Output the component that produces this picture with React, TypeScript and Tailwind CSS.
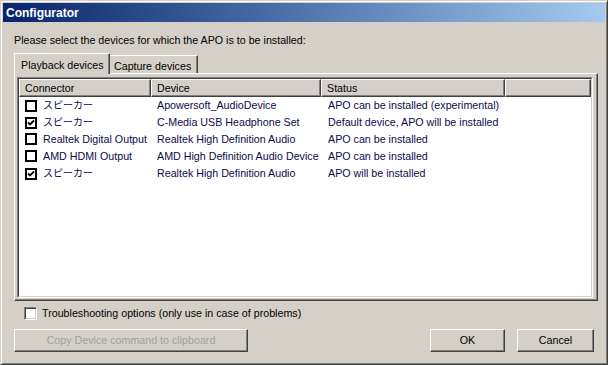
import React from 'react'

const font = { fontFamily: '"Liberation Sans", "Noto Sans CJK JP", sans-serif' }

type Row = { checked: boolean; connector: string; device: string; status: string; jp?: boolean }

const rows: Row[] = [
  { checked: false, connector: 'スピーカー', jp: true, device: 'Apowersoft_AudioDevice', status: 'APO can be installed (experimental)' },
  { checked: true, connector: 'スピーカー', jp: true, device: 'C-Media USB Headphone Set', status: 'Default device, APO will be installed' },
  { checked: false, connector: 'Realtek Digital Output', device: 'Realtek High Definition Audio', status: 'APO can be installed' },
  { checked: false, connector: 'AMD HDMI Output', device: 'AMD High Definition Audio Device', status: 'APO can be installed' },
  { checked: true, connector: 'スピーカー', jp: true, device: 'Realtek High Definition Audio', status: 'APO will be installed' },
]

const raised =
  'border border-t-white border-l-white border-r-[#404040] border-b-[#404040] shadow-[inset_-1px_-1px_0_#808080]'

function ListCheck({ checked }: { checked: boolean }) {
  return (
    <span className="flex h-[12px] w-[12px] shrink-0 items-center justify-center border-2 border-black bg-white">
      {checked && (
        <svg width="8" height="8" viewBox="0 0 8 8">
          <path d="M1 3.5 L3 5.5 L7 1.5" stroke="#000" strokeWidth="1.8" fill="none" />
        </svg>
      )}
    </span>
  )
}

function HeaderCell({ label, width }: { label: string; width: string }) {
  return (
    <div className={`${width} ${raised} flex h-full shrink-0 items-center pl-[5px] text-black`}>{label}</div>
  )
}

export default function App() {
  return (
    <div
      className="h-[365px] w-[608px] overflow-hidden border border-t-[#d4d0c8] border-l-[#d4d0c8] border-r-[#404040] border-b-[#404040] bg-[#d4d0c8] p-[2px] text-[10.7px] shadow-[inset_1px_1px_0_white,inset_-1px_-1px_0_#808080]"
      style={font}
    >
      <div className="flex h-[19px] items-center bg-gradient-to-r from-[#0a246a] to-[#a6caf0] pl-[3px] text-[12px] font-bold text-white">
        Configurator
      </div>

      <div className="px-[11px]">
        <div className="mt-[12px] h-[13px] leading-[13px] text-black">
          Please select the devices for which the APO is to be installed:
        </div>

        <div className="mt-[6px] flex h-[20px] items-end">
          <div className="relative z-10 -mb-px flex h-[21px] w-[96px] items-start border border-b-0 border-t-white border-l-white border-r-[#404040] bg-[#d4d0c8] pl-[6px] pt-[3px] text-black shadow-[inset_-1px_0_0_#808080]">
            Playback devices
          </div>
          <div className="flex h-[18px] w-[88px] items-start border border-b-0 border-t-white border-l-0 border-r-[#404040] pl-[4px] pt-[2px] text-black shadow-[inset_-1px_0_0_#808080]">
            Capture devices
          </div>
        </div>

        <div className="h-[228px] w-[584px] border border-t-white border-l-white border-r-[#404040] border-b-[#404040] pl-[2px] pt-[3px] shadow-[inset_-1px_-1px_0_#808080]">
          <div className="h-[221px] w-[576px] border border-t-[#808080] border-l-[#808080] border-r-white border-b-white">
            <div className="h-full w-full border border-t-[#404040] border-l-[#404040] border-r-[#d4d0c8] border-b-[#d4d0c8] bg-white">
              <div className="flex h-[18px] bg-[#d4d0c8]">
                <HeaderCell label="Connector" width="w-[132px]" />
                <HeaderCell label="Device" width="w-[170px]" />
                <HeaderCell label="Status" width="w-[184px]" />
                <HeaderCell label="" width="w-[86px]" />
              </div>
              <div className="text-[#0b0b4a]">
                {rows.map((row, i) => (
                  <div key={i} className="flex h-[17px] items-center">
                    <div className="flex w-[132px] items-center gap-[6px] pl-[6px]">
                      <ListCheck checked={row.checked} />
                      <span className={row.jp ? 'whitespace-nowrap text-[10px]' : 'whitespace-nowrap'}>
                        {row.connector}
                      </span>
                    </div>
                    <div className="w-[170px] whitespace-nowrap pl-[6px]">{row.device}</div>
                    <div className="w-[184px] whitespace-nowrap pl-[7px]">{row.status}</div>
                  </div>
                ))}
              </div>
            </div>
          </div>
        </div>

        <label className="mt-[6px] ml-[10px] flex h-[13px] items-center gap-[5px] text-black">
          <span className="h-[13px] w-[13px] border border-t-[#808080] border-l-[#808080] border-r-white border-b-white bg-white shadow-[inset_1px_1px_0_#404040,inset_-1px_-1px_0_#d4d0c8]" />
          Troubleshooting options (only use in case of problems)
        </label>

        <div className="mt-[9px] flex h-[23px]">
          <button className={`${raised} h-[23px] w-[234px] bg-[#d4d0c8] text-[#a0a0a0]`}>
            Copy Device command to clipboard
          </button>
          <div className="flex-1" />
          <button className={`${raised} h-[23px] w-[75px] bg-[#d4d0c8] text-black`}>OK</button>
          <button className={`${raised} ml-[12px] h-[23px] w-[77px] bg-[#d4d0c8] text-black`}>Cancel</button>
        </div>
      </div>
    </div>
  )
}
